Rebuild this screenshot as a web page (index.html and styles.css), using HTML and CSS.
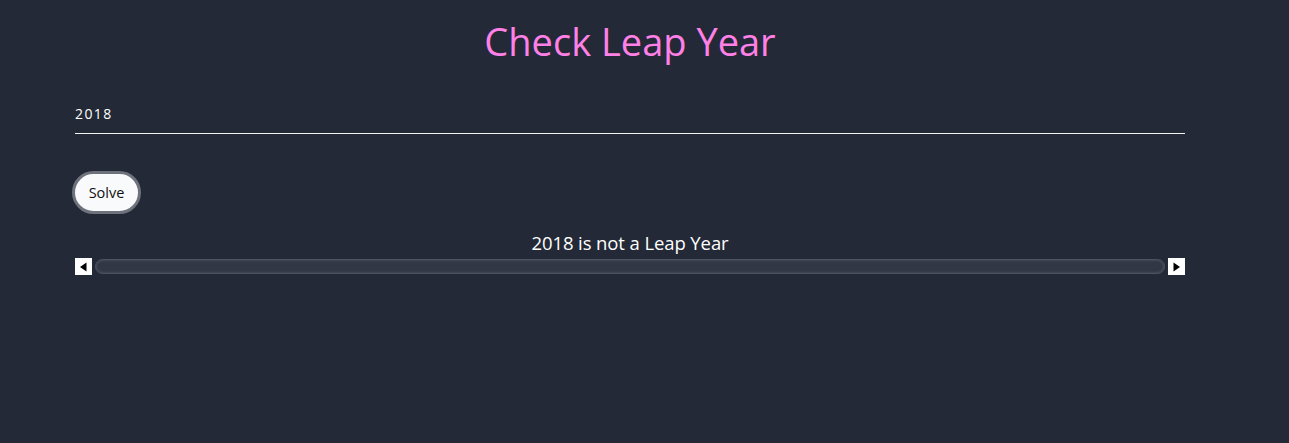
FILE: index.html
```html
<!DOCTYPE html>
<html>
<head>
<meta charset="utf-8">
<link rel="stylesheet" href="styles.css">
</head>
<body>
<div class="page">
  <h1 class="title">Check Leap Year</h1>
  <div class="field">2018</div>
  <button class="solve">Solve</button>
  <div class="result">2018 is not a Leap Year</div>
  <div class="scrollbar">
    <div class="arrow"><svg width="9" height="10" viewBox="0 0 9 10"><path d="M7.5 0.5 L1 5 L7.5 9.5 Z" fill="#000"/></svg></div>
    <div class="track"></div>
    <div class="arrow"><svg width="9" height="10" viewBox="0 0 9 10"><path d="M1.5 0.5 L8 5 L1.5 9.5 Z" fill="#000"/></svg></div>
  </div>
</div>
</body>
</html>
```
FILE: styles.css
```css
html, body { margin: 0; padding: 0; }
body {
  background: #232936;
  width: 1289px;
  height: 443px;
  font-family: "Open Sans", "Noto Sans", sans-serif;
  color: #fff;
}
.page {
  margin: 0 104px 0 75px;
  display: flex;
  flex-direction: column;
}
.title {
  margin: 16px 0 0 0;
  text-align: center;
  font-weight: 400;
  font-size: 38px;
  line-height: 50px;
  color: #ff80e6;
  letter-spacing: 0;
}
.field {
  margin-top: 39px;
  font-size: 14px;
  letter-spacing: 1.4px;
  line-height: 18px;
  padding-bottom: 10px;
  border-bottom: 1px solid #f2f2f2;
}
.solve {
  align-self: flex-start;
  margin: 37px 0 0 -3px;
  width: 69px;
  height: 43px;
  background: #f9fafc;
  border: 3px solid #6e727d;
  border-radius: 22px;
  font-family: "Open Sans", sans-serif;
  font-size: 14.5px;
  color: #111;
  padding: 0;
}
.result {
  margin-top: 17px;
  text-align: center;
  font-size: 18.5px;
  line-height: 24px;
  letter-spacing: -0.1px;
}
.scrollbar {
  display: flex;
  height: 17px;
  margin-top: 3px;
}
.arrow {
  width: 17px;
  height: 17px;
  background: #fff;
  display: flex;
  align-items: center;
  justify-content: center;
}
.track {
  flex: 1;
  margin: 1px 3px 1px 3px;
  border-radius: 8px;
  background: #313744;
  border: 1px solid #4d5361;
  box-shadow: inset 0 0 3px #565c6a;
}
```
